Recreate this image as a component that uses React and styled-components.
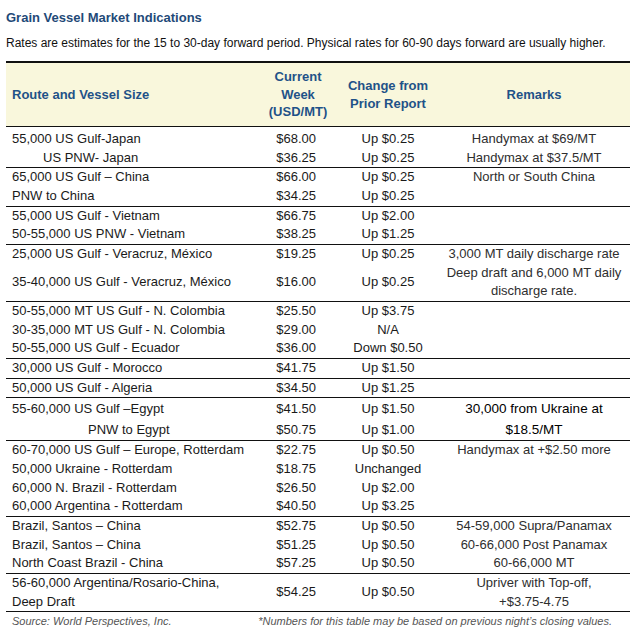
import styled, { createGlobalStyle } from "styled-components";

const GlobalStyle = createGlobalStyle`
  body {
    margin: 0;
    background: #fff;
    font-family: "Liberation Sans", Arial, sans-serif;
    color: #1a1a1a;
  }
`;

const Page = styled.div`
  width: 638px;
  padding: 9px 8px 0 6px;
  box-sizing: border-box;
`;

const Title = styled.h1`
  margin: 0;
  font-size: 13px;
  line-height: 17px;
  font-weight: bold;
  color: #1f4a78;
`;

const Subtitle = styled.p`
  margin: 9px 0 10px;
  font-size: 12px;
  line-height: 16px;
  color: #111;
  white-space: nowrap;
`;

const Table = styled.table`
  width: 624px;
  border-collapse: collapse;
  table-layout: fixed;
  border-top: 2px solid #111;
`;

const HeadCell = styled.th`
  background: #f9f7dc;
  color: #1f5288;
  font-size: 13px;
  line-height: 17.5px;
  font-weight: bold;
  height: 63px;
  padding: 0;
  text-align: ${({ $align }) => $align || "center"};
  padding-left: ${({ $align }) => ($align === "left" ? "6px" : "0")};
  border-bottom: 1px solid #111;
`;

const Group = styled.tbody`
  border-bottom: 1px solid #111;

  & > tr:first-child > td {
    padding-top: ${({ $top }) => ($top ? "3px" : "0")};
  }
`;

const Cell = styled.td`
  padding: 0;
  font-size: 13px;
  line-height: 18.67px;
  vertical-align: middle;
  white-space: nowrap;
  color: #1a1a1a;
`;

const RouteCell = styled(Cell)`
  padding-left: ${({ $indent }) => 6 + ($indent || 0)}px;
`;

const RateCell = styled(Cell)`
  text-align: right;
  padding-right: 22px;
`;

const ChangeCell = styled(Cell)`
  text-align: center;
`;

const RemarkCell = styled(Cell)`
  text-align: center;
  color: ${({ $dark }) => ($dark ? "#000" : "#2e2e2e")};
  font-size: ${({ $dark }) => ($dark ? "13.5px" : "13px")};
  line-height: ${({ $dark }) => ($dark ? "21px" : "18.67px")};
`;

const Footer = styled.div`
  display: flex;
  justify-content: space-between;
  width: 624px;
  box-sizing: border-box;
  padding: 1px 18px 0 6px;
  font-size: 11px;
  line-height: 16px;
  font-style: italic;
  color: #555;
`;

const groups = [
  [
    { route: "55,000 US Gulf-Japan", rate: "$68.00", change: "Up $0.25", remark: "Handymax at $69/MT" },
    { route: "US PNW- Japan", indent: 31, rate: "$36.25", change: "Up $0.25", remark: "Handymax at $37.5/MT" },
  ],
  [
    { route: "65,000 US Gulf \u2013 China", rate: "$66.00", change: "Up $0.25", remark: "North or South China" },
    { route: "PNW to China", rate: "$34.25", change: "Up $0.25", remark: "" },
  ],
  [
    { route: "55,000 US Gulf - Vietnam", rate: "$66.75", change: "Up $2.00", remark: "" },
    { route: "50-55,000 US PNW - Vietnam", rate: "$38.25", change: "Up $1.25", remark: "" },
  ],
  [
    { route: "25,000 US Gulf - Veracruz, México", rate: "$19.25", change: "Up $0.25", remark: "3,000 MT daily discharge rate" },
    {
      route: "35-40,000 US Gulf - Veracruz, México",
      rate: "$16.00",
      change: "Up $0.25",
      remark: ["Deep draft and 6,000 MT daily", "discharge rate."],
    },
  ],
  [
    { route: "50-55,000 MT US Gulf - N. Colombia", rate: "$25.50", change: "Up $3.75", remark: "" },
    { route: "30-35,000 MT US Gulf - N. Colombia", rate: "$29.00", change: "N/A", remark: "" },
    { route: "50-55,000 US Gulf - Ecuador", rate: "$36.00", change: "Down $0.50", remark: "" },
  ],
  [{ route: "30,000 US Gulf - Morocco", rate: "$41.75", change: "Up $1.50", remark: "" }],
  [{ route: "50,000 US Gulf - Algeria", rate: "$34.50", change: "Up $1.25", remark: "" }],
  [
    {
      route: "55-60,000 US Gulf \u2013Egypt",
      rate: "$41.50",
      change: "Up $1.50",
      remark: ["30,000 from Ukraine at", "$18.5/MT"],
      span: 2,
      dark: true,
    },
    { route: "PNW to Egypt", indent: 76, rate: "$50.75", change: "Up $1.00", skip: true },
  ],
  [
    { route: "60-70,000 US Gulf \u2013 Europe, Rotterdam", rate: "$22.75", change: "Up $0.50", remark: "Handymax at +$2.50 more" },
    { route: "50,000 Ukraine - Rotterdam", rate: "$18.75", change: "Unchanged", remark: "" },
    { route: "60,000 N. Brazil - Rotterdam", rate: "$26.50", change: "Up $2.00", remark: "" },
    { route: "60,000 Argentina - Rotterdam", rate: "$40.50", change: "Up $3.25", remark: "" },
  ],
  [
    { route: "Brazil, Santos \u2013 China", rate: "$52.75", change: "Up $0.50", remark: "54-59,000 Supra/Panamax" },
    { route: "Brazil, Santos \u2013 China", rate: "$51.25", change: "Up $0.50", remark: "60-66,000 Post Panamax" },
    { route: "North Coast Brazil - China", rate: "$57.25", change: "Up $0.50", remark: "60-66,000 MT" },
  ],
  [
    {
      route: ["56-60,000 Argentina/Rosario-China,", "Deep Draft"],
      rate: "$54.25",
      change: "Up $0.50",
      remark: ["Upriver with Top-off,", "+$3.75-4.75"],
    },
  ],
];

const lines = (text) =>
  Array.isArray(text)
    ? text.map((t, i) => (
        <span key={i}>
          {i > 0 && <br />}
          {t}
        </span>
      ))
    : text;

export default function App() {
  return (
    <Page>
      <GlobalStyle />
      <Title>Grain Vessel Market Indications</Title>
      <Subtitle>
        Rates are estimates for the 15 to 30-day forward period. Physical rates for 60-90 days forward are usually higher.
      </Subtitle>
      <Table>
        <colgroup>
          <col style={{ width: 252 }} />
          <col style={{ width: 80 }} />
          <col style={{ width: 100 }} />
          <col style={{ width: 192 }} />
        </colgroup>
        <thead>
          <tr>
            <HeadCell $align="left">Route and Vessel Size</HeadCell>
            <HeadCell>
              Current
              <br />
              Week
              <br />
              (USD/MT)
            </HeadCell>
            <HeadCell>
              Change from
              <br />
              Prior Report
            </HeadCell>
            <HeadCell>Remarks</HeadCell>
          </tr>
        </thead>
        {groups.map((rows, g) => (
          <Group key={g} $top={g === 0}>
            {rows.map((r, i) => (
              <tr key={i}>
                <RouteCell $indent={r.indent}>{lines(r.route)}</RouteCell>
                <RateCell>{r.rate}</RateCell>
                <ChangeCell>{r.change}</ChangeCell>
                {!r.skip && (
                  <RemarkCell rowSpan={r.span || 1} $dark={r.dark}>
                    {lines(r.remark)}
                  </RemarkCell>
                )}
              </tr>
            ))}
          </Group>
        ))}
      </Table>
      <Footer>
        <span>Source: World Perspectives, Inc.</span>
        <span>*Numbers for this table may be based on previous night&rsquo;s closing values.</span>
      </Footer>
    </Page>
  );
}
